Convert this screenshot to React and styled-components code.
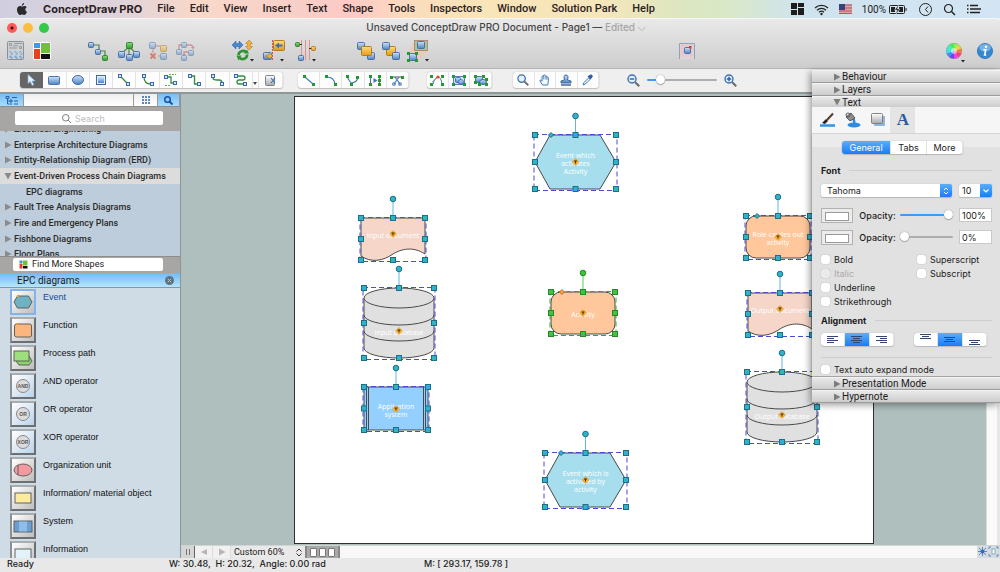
import React from 'react';
import styled, { createGlobalStyle, css } from 'styled-components';

const GlobalStyle = createGlobalStyle`
    * { box-sizing: border-box; }
    body { margin: 0; overflow: hidden; }
    body, button, input, select {
        font-family: Inter, Roboto, "Liberation Sans", sans-serif;
        font-size: 9px;
        color: #1c1c1c;
    }
    button { border: 0; padding: 0; background: none; }
    svg { display: block; flex: none; overflow: visible; }
`;

const narrowFont = 'Roboto, Inter, "Liberation Sans", sans-serif';

const AppContainer = styled.div`
    display: flex;
    flex-direction: column;
    height: 100vh;
    position: relative;
    background: #ececec;
`;

/* ---------- menu bar ---------- */

const MenuBar = styled.nav`
    display: flex;
    align-items: center;
    flex: none;
    height: 18px;
    padding: 0 19px 0 17px;
    background: linear-gradient(90deg, #d0cfe0 0%, #dfd3da 12%, #f9d8c9 20%, #f8cfc8 30%, #ffc9c6 35%, #fbdcbd 41%, #f8e5b8 48%, #f6e6bb 60%, #dde6c0 68%, #d9e8c9 73%, #cfe3ee 80%, #d3e5f4 100%);
`;

const MenuList = styled.div`
    display: flex;
    gap: 15px;
    margin-left: 16px;
`;

const MenuItem = styled.button`
    font-family: ${props => props.$bold ? 'Inter, sans-serif' : narrowFont};
    font-size: 11px;
    line-height: 18px;
    font-weight: ${props => props.$bold ? 700 : 500};
    color: #2b211f;
    white-space: nowrap;
`;

const MenuExtras = styled.div`
    display: flex;
    align-items: center;
    gap: ${props => props.$gap}px;
    margin-left: auto;
`;

const BatteryStatus = styled.div`
    display: flex;
    align-items: center;
    gap: 3px;
    font-family: ${narrowFont};
    font-size: 10px;
`;

/* ---------- window chrome ---------- */

const WindowHeader = styled.header`
    flex: none;
    height: 51px;
    border-top: 1px solid #f6f6f6;
    border-bottom: 1px solid #b5b5b5;
    border-radius: 4px 4px 0 0;
    background: linear-gradient(#e9e9e9, #cdcdcd);
`;

const TitleRow = styled.div`
    display: grid;
    grid-template-columns: 1fr auto 1fr;
    align-items: center;
    height: 17px;
    padding: 0 7px;
`;

const TrafficLights = styled.div`
    display: flex;
    gap: 6px;
`;

const TrafficLight = styled.button`
    width: 10px;
    height: 10px;
    border-radius: 50%;
    background: ${props => props.$color};
`;

const WindowTitle = styled.h1`
    margin: 0;
    padding-left: 12px;
    font-size: 10px;
    font-weight: 500;
    color: #464646;

    span { color: #a5a5a5; }
`;

const MainToolbar = styled.div`
    display: flex;
    align-items: center;
    height: 29px;
    padding: 0 7px;
`;

const IconGroup = styled.div`
    display: flex;
    align-items: center;
    gap: ${props => props.$gap || 9}px;
    margin-left: ${props => props.$push ? 'auto' : (props.$before || 0) + 'px'};
`;

const IconButton = styled.button`
    display: flex;
    opacity: ${props => props.$faded ? 0.55 : 1};
`;

const DrawToolbar = styled.div`
    display: flex;
    align-items: center;
    flex: none;
    height: 25px;
    padding: 0 20px 1px;
    background: #efefef;
    border-bottom: 2px solid #8f9898;
`;

const ToolSet = styled.div`
    display: grid;
    grid-template-columns: ${props => props.$columns};
    width: ${props => props.$width}px;
    height: 16px;
    margin-left: ${props => props.$before || 0}px;
    border-radius: 3px;
    overflow: hidden;
    background: #fdfdfd;
    box-shadow: 0 0 1px #999, 0 1px 1px #c4c4c4;
`;

const Tool = styled.button`
    display: flex;
    align-items: center;
    justify-content: center;
    border-right: 1px solid #e4e4e4;
    ${props => props.$active && css`
        background: #666;
        border-color: #666;
    `}
`;

const ZoomControl = styled.div`
    display: flex;
    align-items: center;
    gap: 7px;
    margin-left: 28px;
`;

const Slider = styled.input.attrs({ type: 'range' })`
    appearance: none;
    width: ${props => props.$width}px;
    height: 12px;
    margin: 0;
    background: none;

    &::-webkit-slider-runnable-track {
        height: 2px;
        border-radius: 1px;
        background: linear-gradient(90deg, #3d9bf7 ${props => props.value}%, #adadad ${props => props.value}%);
    }
    &::-webkit-slider-thumb {
        appearance: none;
        width: 9px;
        height: 9px;
        margin-top: -4px;
        border-radius: 50%;
        background: #fff;
        box-shadow: 0 0 1px #777, 0 1px 1px #aaa;
    }
`;

/* ---------- library panel ---------- */

const Body = styled.div`
    display: flex;
    flex: 1;
    min-height: 0;
`;

const Sidebar = styled.aside`
    display: flex;
    flex-direction: column;
    flex: none;
    width: 181px;
    border-right: 1px solid #8e9496;
    background: #cfdbe5;
    font-family: ${narrowFont};
`;

const SidebarTabs = styled.div`
    display: grid;
    grid-template-columns: 24px 1fr 24px 22px;
    flex: none;
    height: 12px;
    background: #8a8a8a;
`;

const SidebarTab = styled.button`
    display: flex;
    align-items: center;
    justify-content: center;
    border-right: 1px solid #999;
    background: ${props => props.$active ? 'linear-gradient(#78bdf4, #a8dcff)' : 'linear-gradient(#eee, #fff)'};
`;

const SearchBand = styled.div`
    display: flex;
    align-items: center;
    flex: none;
    height: ${props => props.$height}px;
    padding: 0 17px 2px ${props => props.$height > 20 ? 15 : 13}px;
    border-top: 1px solid #8d8d8d;
    background: #a7a6a4;
`;

const SearchField = styled.label`
    display: flex;
    align-items: center;
    gap: 4px;
    flex: 1;
    height: 14px;
    padding-left: 47px;
    border-radius: 2px;
    background: #fff;
`;

const SearchInput = styled.input`
    width: 80px;
    border: 0;
    padding: 0;
    background: none;
    outline: none;

    &::placeholder { color: #bcbcbc; }
`;

const TreeViewport = styled.div`
    flex: none;
    height: 125px;
    overflow: hidden;
    background: #becddb;
`;

/* list is scrolled down a little, first row is cut off */
const TreeList = styled.ul`
    display: flex;
    flex-direction: column;
    height: 141px;
    margin: -10px 0 0;
    padding: 0;
    list-style: none;
`;

const TreeRow = styled.li`
    display: flex;
    align-items: center;
    gap: 3px;
    flex: 1;
    padding-left: ${props => props.$child ? 26 : 5}px;
    background: ${props => props.$selected ? '#dcdcdc' : 'transparent'};
    font-weight: 500;
    color: #2a2a2a;
    white-space: nowrap;
`;

const FindMoreButton = styled.button`
    display: flex;
    align-items: center;
    gap: 4px;
    flex: 1;
    height: 13px;
    padding-left: 6px;
    border-radius: 2px;
    background: #fff;
    font-family: ${narrowFont};
`;

const LibraryHeader = styled.div`
    display: flex;
    align-items: center;
    justify-content: space-between;
    flex: none;
    height: 15px;
    padding: 0 6px 0 17px;
    border-bottom: 1px solid #8797a2;
    background: linear-gradient(#72b9f2, #b4e6ff);
    font-size: 10px;
`;

const LibraryList = styled.ul`
    flex: 1;
    min-height: 0;
    margin: 0;
    padding: 1px 0 0 10px;
    overflow: hidden;
    list-style: none;
`;

const LibraryItem = styled.li`
    display: flex;
    gap: 7px;
    height: 28px;
    font-family: "Liberation Sans", Arial, sans-serif;
    line-height: 16px;
    color: ${props => props.$selected ? '#1747a0' : '#111'};
`;

const Thumb = styled.div`
    display: flex;
    align-items: center;
    justify-content: center;
    width: 26px;
    height: 26px;
    border: 2px solid;
    border-color: ${props => props.$selected ? '#82b4ea' : '#a9adb0 #6d7072 #6d7072 #8d9092'};
    background: ${props => props.$tint ? 'linear-gradient(135deg, #fff, #b9d2ec)' : 'linear-gradient(135deg, #fff, #bdbdbd)'};
`;

/* ---------- canvas ---------- */

const Workspace = styled.main`
    display: flex;
    flex-direction: column;
    flex: 1;
    min-width: 0;
`;

const CanvasRow = styled.div`
    display: flex;
    flex: 1;
    min-height: 0;
`;

const Canvas = styled.div`
    display: flex;
    flex: 1;
    padding: 2px 112px 1px 113px;
    background: #afbfbe;
`;

const Page = styled.div`
    position: relative;
    flex: 1;
    border: 1px solid #2e2e2e;
    background: #fff;
`;

const VerticalScroll = styled.div`
    width: 14px;
    border-right: 3px solid #e6e6e6;
    border-left: 1px solid #dcdcdc;
    background: #fafafa;
`;

const Node = styled.div`
    position: absolute;
    left: ${props => props.$x}px;
    top: ${props => props.$y}px;
    width: ${props => props.$w}px;
    height: ${props => props.$h}px;
`;

const NodeLayer = styled.svg`
    position: absolute;
    left: 0;
    top: 0;
`;

const NodeLabel = styled.div`
    position: absolute;
    left: 0;
    right: 0;
    top: 0;
    display: flex;
    align-items: center;
    justify-content: center;
    height: ${props => props.$h}px;
    font-family: "Open Sans", "Noto Sans", sans-serif;
    font-size: 7px;
    line-height: 8px;
    color: #fff;
    text-align: center;
    white-space: pre;
`;

const BottomRow = styled.div`
    display: flex;
    align-items: stretch;
    flex: none;
    height: 13px;
    border-top: 1px solid #cfd4d4;
    background: #f8f8f8;
`;

const PageStep = styled.button`
    display: flex;
    align-items: center;
    justify-content: center;
    width: ${props => props.$narrow ? 14 : 18}px;
    border-right: 1px solid ${props => props.$narrow ? '#666' : '#dcdcdc'};
    background: ${props => props.$narrow ? '#d5d5d5' : '#f1f1f1'};
`;

const ZoomSelectWrap = styled.label`
    display: flex;
    align-items: center;
    width: 74px;
    padding: 0 3px;
    background: #e9e9e9;
`;

const PlainSelect = styled.select`
    appearance: none;
    flex: 1;
    min-width: 0;
    height: 12px;
    border: 0;
    padding: 0;
    background: none;
    outline: none;
    font-family: ${props => props.$narrow ? narrowFont : 'Inter, sans-serif'};
`;

const PageThumbs = styled.div`
    display: flex;
    align-items: center;
    justify-content: center;
    gap: 2px;
    width: 35px;
    border: 1px solid #888;
    border-width: 0 2px;
    background: #a9a9a9;
`;

const PageThumb = styled.button`
    width: 7px;
    height: 9px;
    border: 1px solid #777;
    border-radius: 1px;
    background: #fff;
`;

const FitButtons = styled.div`
    display: flex;
    margin-left: auto;
    padding-right: 1px;
    background: #d5dbe0;
`;

const StatusBar = styled.footer`
    display: grid;
    grid-template-columns: 162px 255px 1fr;
    align-items: center;
    flex: none;
    height: 14px;
    padding: 0 0 4px 7px;
    background: #e8e8e8;
    font-weight: 500;

    span { white-space: pre; }
`;

/* ---------- inspector ---------- */

const Inspector = styled.section`
    position: absolute;
    top: 70px;
    right: 0;
    width: 188px;
    background: #e2e2e2;
    box-shadow: -2px 2px 7px rgba(0, 0, 0, 0.4);
`;

const SectionHeader = styled.button`
    display: flex;
    align-items: center;
    gap: 2px;
    width: 100%;
    height: ${props => props.$open ? 11 : 13}px;
    padding-left: 22px;
    border-top: 1px solid #f2f2f2;
    border-bottom: ${props => props.$open ? 0 : 1}px solid #9c9c9c;
    background: linear-gradient(#e8e8e8, #cdcdcd);
    font-family: ${narrowFont};
    font-size: 10px;
`;

const InspectorIcons = styled.div`
    display: flex;
    height: 27px;
    padding-left: 3px;
    border-bottom: 1px solid #dadada;
    background: #f6f6f6;
`;

const InspectorIcon = styled.button`
    display: flex;
    align-items: center;
    justify-content: center;
    width: 25px;
    background: ${props => props.$active ? '#e4e4e4' : 'none'};
`;

const InspectorBody = styled.div`
    padding: 7px 8px 0 9px;
    border-bottom: 1px solid #a5a5a5;
    background: linear-gradient(#ebebeb 13px, #e1e1e1 13px);
    box-shadow: 0 1px 2px rgba(0, 0, 0, 0.3);
`;

const Segments = styled.div`
    display: grid;
    grid-template-columns: ${props => props.$columns || '1fr 1fr 1fr'};
    width: ${props => props.$width}px;
    height: 13px;
    border-radius: 3px;
    overflow: hidden;
    background: #fff;
    box-shadow: 0 0 1px #999, 0 1px 1px #bbb;
`;

const Segment = styled.button`
    display: flex;
    align-items: center;
    justify-content: center;
    border-right: 1px solid #e3e3e3;
    ${props => props.$active && css`
        background: linear-gradient(#5aaefb, #1b7cf6);
        color: #fff;
    `}
`;

const TabsRow = styled.div`
    display: flex;
    justify-content: center;
    padding: 0 8px 4px 0;
`;

const GroupTitle = styled.h2`
    display: flex;
    align-items: center;
    gap: 9px;
    margin: 6px 0;
    font-size: 9px;
    line-height: 13px;
    font-weight: 700;

    &::after {
        content: '';
        flex: 1;
        height: 1px;
        background: #cdcdcd;
    }
`;

const FieldRow = styled.div`
    display: flex;
    align-items: center;
    justify-content: space-between;
    height: ${props => props.$height}px;
`;

const SelectBox = styled.label`
    display: flex;
    width: ${props => props.$width}px;
    height: 13px;
    padding-left: ${props => props.$width > 50 ? 6 : 3}px;
    border-radius: 2px;
    overflow: hidden;
    background: #fff;
    box-shadow: 0 0 1px #999, 0 1px 1px #bbb;
`;

const SelectCap = styled.span`
    display: flex;
    align-items: center;
    justify-content: center;
    width: 12px;
    background: linear-gradient(#5aaefb, #1b7cf6);
`;

const Swatch = styled.button`
    width: 32px;
    height: 15px;
    padding: 3px;
    border: 1px solid #b2b2b2;
    background: #ececec;

    &::before {
        content: '';
        display: block;
        height: 7px;
        border: 1px solid #999;
        background: #fff;
    }
`;

const OpacityRows = styled.div`
    padding: 6px 0 4px;
`;

const OpacityField = styled.label`
    display: flex;
    align-items: center;
    gap: 4px;
    font-weight: 500;
`;

const PercentInput = styled.input`
    width: 33px;
    height: 14px;
    border: 1px solid #c9c9c9;
    padding: 0 2px;
    background: #fff;
`;

const CheckGrid = styled.div`
    display: grid;
    grid-template-columns: 96px 1fr;
    grid-auto-flow: column;
    grid-template-rows: repeat(4, 14px);
`;

const CheckLabel = styled.label`
    display: flex;
    align-items: center;
    gap: 4px;
    height: 14px;
    color: ${props => props.$disabled ? '#a9a9a9' : '#1c1c1c'};
`;

const CheckBox = styled.input.attrs({ type: 'checkbox' })`
    appearance: none;
    width: 9px;
    height: 9px;
    margin: 0;
    border-radius: 2px;
    background: #fff;
    box-shadow: 0 0 1px #888;

    &:disabled { background: #eaeaea; }
`;

const AlignRow = styled.div`
    display: flex;
    gap: 20px;
    margin-bottom: 4px;
    padding-bottom: 11px;
    border-bottom: 1px solid #cdcdcd;
`;

/* ---------- small drawings ---------- */

function Svg({ w, h, children }) {
    return <svg width={w} height={h} viewBox={`0 0 ${w} ${h}`} fill="none" aria-hidden="true">{children}</svg>;
}

function Gradients() {
    const colors = {
        blue: ['#cfe2fa', '#4d83c6'],
        green: ['#8be07a', '#2c9a2a'],
        gold: ['#ffdc7e', '#e59a12'],
        gray: ['#ffffff', '#a9a9a9'],
    };
    return (
        <NodeLayer width="0" height="0" aria-hidden="true">
            <defs>
                {Object.keys(colors).map(key => (
                    <linearGradient id={key} key={key} x1="0" y1="0" x2="0" y2="1">
                        <stop offset="0" stopColor={colors[key][0]} />
                        <stop offset="1" stopColor={colors[key][1]} />
                    </linearGradient>
                ))}
            </defs>
        </NodeLayer>
    );
}

const strokes = { blue: '#41699c', green: '#2a7a2a', gold: '#a9741a', gray: '#777' };

function Box({ x, y, s = 6, h, c = 'blue' }) {
    return <rect x={x + 0.5} y={y + 0.5} width={s - 1} height={(h || s) - 1} rx="1" fill={`url(#${c})`} stroke={strokes[c]} strokeWidth="0.9" />;
}

function Dots({ points, c = '#1f9a2c', s = 3 }) {
    return points.map(([x, y]) => <rect key={x + '-' + y} x={x} y={y} width={s} height={s} fill={c} />);
}

function Ends({ a, b }) {
    return (
        <>
            <rect x={a[0]} y={a[1]} width="3" height="3" fill="#d5e6fa" stroke="#3b6ca8" />
            <rect x={b[0]} y={b[1]} width="3" height="3" fill="#d5e6fa" stroke="#3b6ca8" />
        </>
    );
}

function Triangle({ open, color = '#7d7d7d' }) {
    return (
        <Svg w={6} h={6}>
            <path d={open ? 'M-0.500 0h7L3 6.500z' : 'M0-0.500 6.500 3 0 6.500z'} fill={color} />
        </Svg>
    );
}

function Caret({ x, y }) {
    return <path d={`M${x} ${y}h4l-2 2.4z`} fill="#222" />;
}

function SolutionIcon({ size }) {
    return (
        <svg width={size} height={size} viewBox="0 0 18 18" aria-hidden="true">
            <rect width="18" height="18" rx="2" fill="#fff" />
            <path d="M1 1h6v5H1z" fill="#2f9df4" />
            <path d="M8 1h9v10H8z" fill="#6fc03a" />
            <path d="M1 7h6v10H1z" fill="#e8401c" />
            <path d="M8 12h9v5H8z" fill="#111" />
        </svg>
    );
}

function Magnifier({ sign, size = 13, color = '#3c70b4' }) {
    return (
        <svg width={size} height={size} viewBox="0 0 13 13" fill="none" aria-hidden="true">
            <path d="M8.200 8.200l4 4" stroke="#6b6b6b" strokeWidth="2" />
            <circle cx="5" cy="5" r="4" fill="#e4f0fc" stroke={color} strokeWidth="1.400" />
            {sign && <path d={sign === '+' ? 'M2.800 5h4.400M5 2.800v4.400' : 'M2.800 5h4.400'} stroke="#2a5ea8" strokeWidth="1.400" />}
        </svg>
    );
}

const mainIcons = {
    library: (
        <Svg w={18} h={19}>
            <rect x="0.500" y="0.500" width="16" height="18" rx="1" fill="#cdd1d4" stroke="#8b9094" />
            <path d="M2.500 2.500h2v2h-2zM7 2.500h8M2 7h8M12.500 5.500h2v2h-2zM6 4.800h5" stroke="#8d9499" strokeWidth="0.900" />
            <path d="M2.500 10.500l3 3M7.500 10.500l3 3M12.500 10.500l2.500 3M2.500 15l3 2.500M7.500 15l3 2.500M12.500 15l2.500 2.500" stroke="#7fa9cf" strokeWidth="2" />
            <path d="M2.500 11l2 2M7.500 11l2 2M12.500 11l2 2" stroke="#e3f0fa" strokeWidth="0.800" />
        </Svg>
    ),
    chain: (
        <Svg w={22} h={20}>
            <path d="M7 4h5v4M14 10h4v4" stroke="#44874a" strokeWidth="1.200" />
            <Box x={1} y={1} /><Box x={8} y={8} /><Box x={15} y={14} c="green" />
        </Svg>
    ),
    tree: (
        <Svg w={22} h={20}>
            <path d="M11 6L4 12M11 6v9M11 6l7 6" stroke="#4c8c4c" strokeWidth="1.200" />
            <Box x={8} y={1} s={7} c="green" /><Box x={0} y={10} s={7} /><Box x={15} y={10} s={7} /><Box x={8} y={13} s={7} />
        </Svg>
    ),
    remove: (
        <Svg w={18} h={18}>
            <path d="M4 6v5M6 4h6M9 14h3" stroke="#b05a4a" />
            <Box x={0} y={0} s={7} /><Box x={11} y={3} s={7} c="gold" /><Box x={11} y={11} s={7} />
            <path d="M1.500 11.500l5 5M6.500 11.500l-5 5" stroke="#d43b2c" strokeWidth="2" />
        </Svg>
    ),
    rotate: (
        <Svg w={18} h={18}>
            <path d="M3 7V3h3M10 3h4q3 0 3 3M13 10H8v3" stroke="#c85a66" strokeWidth="1.300" />
            <path d="M15 5h4l-2 2.500zM6 12h4l-2 2.500z" fill="#c85a66" />
            <Box x={5} y={0} s={6} /><Box x={0} y={7} s={6} /><Box x={12} y={8} s={6} /><Box x={5} y={13} s={6} />
        </Svg>
    ),
    flip: (
        <Svg w={22} h={21}>
            <path d="M0 5l4-4v2.500h3V1l4 4-4 4V6.500H4V9z" fill="#4788d0" stroke="#2a5a94" strokeWidth="0.500" />
            <path d="M17 0l3.500 3.500h-2v3h2L17 10l-3.500-3.500h2v-3h-2z" fill="#f1b23a" stroke="#a87318" strokeWidth="0.500" />
            <path d="M6.500 15a4.500 4 0 0 1 7.500-3M15 14.500a4.500 4 0 0 1-7.500 3.500" stroke="#2e9330" strokeWidth="2.600" />
            <path d="M12 13.500h5l-2-4zM9.500 15.500h-5l2 5z" fill="#2e9330" />
            <Caret x={18} y={19} />
        </Svg>
    ),
    align: (
        <Svg w={22} h={21}>
            <Box x={10} y={0} s={12} h={11} c="gold" />
            <path d="M12 5.500l4-3v2h3.500v2H16v2z" fill="#3f6fae" />
            <Box x={0} y={12} s={9} h={8} />
            <path d="M3 15h3v-2l4 3-4 3v-2H3z" fill="#f4b73e" stroke="#a06d12" strokeWidth="0.500" />
            <path d="M9.500 0v21" stroke="#e04c4c" strokeDasharray="2 1" />
            <Caret x={17} y={19} />
        </Svg>
    ),
    distribute: (
        <Svg w={22} h={21}>
            <path d="M7.500 0v20M11.500 0v20M15.500 0v20" stroke="#e3908c" />
            <Box x={1} y={2} s={5} c="green" /><Box x={17} y={6} s={5} c="gold" /><Box x={4} y={15} s={6} />
            <path d="M6 4.500h2M15 8.500h2" stroke="#333" />
            <Caret x={18} y={19} />
        </Svg>
    ),
    front: (
        <Svg w={18} h={18}>
            <Box x={0} y={0} s={8} /><Box x={10} y={10} s={8} /><Box x={4} y={4} s={11} h={10} c="gold" />
        </Svg>
    ),
    back: (
        <Svg w={18} h={18}>
            <Box x={4} y={4} s={10} c="gold" /><Box x={0} y={0} s={8} /><Box x={10} y={10} s={8} />
        </Svg>
    ),
    group: (
        <Svg w={22} h={22}>
            <path d="M8 1L1 13l9 8 11-10z" fill="#f3c5b0" opacity="0.700" />
            <rect x="7.500" y="0.500" width="13" height="10" fill="#a8c3a0" stroke="#b48a6a" />
            <Box x={10} y={1} s={8} />
            <Box x={2} y={13} s={8} />
            <Dots points={[[0, 12], [8, 12], [0, 19], [8, 19]]} />
            <Caret x={18} y={19} />
        </Svg>
    ),
    snap: (
        <Svg w={16} h={16}>
            <path d="M0.500 16V0.500h15V16" fill="#e3d3d8" stroke="#8ba3bf" />
            <path d="M1 3h14M1 6h14M1 9h14M1 12h14M4 1v14M12 1v14" stroke="#edb6bb" strokeWidth="0.600" />
            <Box x={5} y={4} s={7} /><path d="M10 3h2.500v2.500H10z" fill="#d8403a" />
        </Svg>
    ),
    info: (
        <Svg w={16} h={16}>
            <circle cx="8" cy="8" r="7.600" fill="#3487d0" stroke="#256aa8" strokeWidth="0.700" />
            <ellipse cx="8" cy="4.800" rx="5.800" ry="3.800" fill="#8fc4ee" opacity="0.700" />
            <circle cx="9" cy="3.800" r="1.200" fill="#fff" />
            <path d="M6.300 6.800h2.500L7.600 12h1.600" stroke="#fff" strokeWidth="1.600" />
        </Svg>
    ),
};

function ColorWheel() {
    const hues = [90, 50, 20, 340, 305, 255, 215, 185, 160, 130];
    const step = (Math.PI * 2) / hues.length;
    return (
        <Svg w={18} h={18}>
            {hues.map((hue, i) => {
                const a = i * step - Math.PI / 2;
                const b = a + step + 0.05;
                return (
                    <path
                        key={hue}
                        d={`M8 9L${8 + 8 * Math.cos(a)} ${9 + 8 * Math.sin(a)}A8 8 0 0 1 ${8 + 8 * Math.cos(b)} ${9 + 8 * Math.sin(b)}z`}
                        fill={`hsl(${hue}, 85%, 60%)`}
                    />
                );
            })}
            <circle cx="8" cy="9" r="3" fill="#fff" opacity="0.500" />
            <circle cx="8" cy="9" r="7.700" stroke="#999" strokeWidth="0.500" />
            <Caret x={15} y={18} />
        </Svg>
    );
}

const green = { stroke: '#2f8f3a', strokeWidth: 1.3 };
const blueLine = { stroke: '#3f78b8', strokeWidth: 1.1 };

const shapeTools = [
    ['Select', <Svg w={9} h={12}><path d="M1 0.500v9l2.200-2 1.900 4 1.700-.8-1.800-3.700h3.200z" fill="#e5f1fd" stroke="#7fb0e0" strokeWidth="0.700" /></Svg>],
    ['Rectangle', <Svg w={12} h={9}><Box x={0} y={0} s={12} h={9} /></Svg>],
    ['Ellipse', <Svg w={12} h={10}><ellipse cx="6" cy="5" rx="5.500" ry="4.500" fill="url(#blue)" stroke="#41699c" /></Svg>],
    ['Text box', <Svg w={10} h={10}><rect x="0.500" y="0.500" width="9" height="9" fill="#e3effb" stroke="#41699c" /><rect x="2" y="2" width="6" height="6" fill="url(#blue)" /></Svg>],
    ['Direct connector', <Svg w={12} h={12}><path d="M3 3l6 6" {...green} /><Ends a={[0.5, 0.5]} b={[8.5, 8.5]} /></Svg>],
    ['Arc connector', <Svg w={12} h={12}><path d="M2 3q0 7 7 7" {...green} /><Ends a={[0.5, 0.5]} b={[8.5, 8.5]} /></Svg>],
    ['Smart connector', <Svg w={13} h={12}><path d="M4 3h3v6h3" {...green} /><path d="M5 0.500h7M1 11.500h6" stroke="#57b45c" strokeDasharray="2 1" /><Ends a={[0.5, 1.5]} b={[9.5, 7.5]} /></Svg>],
    ['Step connector', <Svg w={13} h={12}><path d="M4 2h2.500v8H9" {...green} /><Ends a={[0.5, 0.5]} b={[9.5, 8.5]} /></Svg>],
    ['Round connector', <Svg w={13} h={12}><path d="M2 4q0 2 4 2h2q3 0 3 3" {...green} /><Ends a={[0.5, 0.5]} b={[9.5, 8.5]} /></Svg>],
    ['Curve connector', <Svg w={13} h={12}><path d="M4 2h5q2 0 2 2t-2 2H5q-2 0-2 2t2 2h5" {...green} /><Ends a={[0.5, 0.5]} b={[9.5, 8.5]} /></Svg>],
    ['More connectors', <Svg w={4} h={3}><path d="M0 3h4L2 6z" fill="#444" /></Svg>],
    ['Page link', <Svg w={11} h={11}><Box x={0} y={0} s={10} h={11} c="gray" /><path d="M6 3l4 5M10 3L6 8" stroke="#3f78b8" strokeWidth="1.200" /></Svg>],
];

const lineTools = [
    ['Line', <Svg w={12} h={11}><path d="M2 2l8 7" {...blueLine} /><Dots points={[[0, 0], [9, 8]]} /></Svg>],
    ['Arc', <Svg w={12} h={11}><path d="M2 2q7 0 8 7" {...blueLine} /><Dots points={[[0, 0], [9, 8]]} /></Svg>],
    ['Spline', <Svg w={13} h={11}><path d="M1 2l4 6q5 0 7-5" {...blueLine} /><Dots points={[[0, 0], [4, 8], [10, 1]]} /></Svg>],
    ['Divide', <Svg w={12} h={11}><path d="M1.500 1v9M10.500 1v9" {...blueLine} /><path d="M4.500 3l4 2.500-4 2.500z" fill="#3f78b8" /><Dots points={[[0, 0], [0, 8], [9, 0], [9, 4], [9, 8]]} /></Svg>],
    ['Cut', <Svg w={14} h={11}><path d="M1 2h12" stroke="#555" /><path d="M4 9l5-7M10 9L5 2" {...blueLine} /><circle cx="4" cy="9" r="1.300" {...blueLine} /><circle cx="10" cy="9" r="1.300" {...blueLine} /><Dots points={[[0, 1], [11, 1]]} /></Svg>],
];

const editTools = [
    ['Edit points', <Svg w={14} h={11}><path d="M3 9Q5 2 8 2t4 7" stroke="#3f78b8" /><path d="M2 7l6-5" stroke="#999" /><Dots points={[[0, 0], [11, 0], [0, 8], [11, 8]]} /><circle cx="8" cy="2" r="1.600" fill="#e2452e" /></Svg>],
    ['Group points', <Svg w={14} h={11}><rect x="1.500" y="1.500" width="11" height="8" fill="#d3e4f7" stroke="#4f7fb5" /><Box x={3} y={2} s={6} /><circle cx="9" cy="7" r="2.500" fill="url(#blue)" stroke="#41699c" strokeWidth="0.800" /><Dots points={[[0, 0], [11, 0], [0, 8], [11, 8]]} /></Svg>],
    ['Ungroup points', <Svg w={14} h={11}><Box x={1} y={1} s={8} h={7} /><ellipse cx="9" cy="7" rx="3.500" ry="2.500" fill="url(#blue)" stroke="#41699c" /><Dots points={[[0, 0], [8, 0], [0, 6], [4, 8], [11, 3], [11, 8]]} /></Svg>],
];

const viewTools = [
    ['Zoom', <Magnifier size={12} />],
    ['Pan', <Svg w={12} h={12}><path d="M3.500 11Q1.500 8 0.800 6.500 1.500 5.500 3 7.200V2.500q.8-1 1.500 0V1.300q.9-1 1.600 0v1q.9-1 1.600 0v1.200q.9-.8 1.600 0v4Q9.300 9 8.500 11z" fill="#f4f9fe" stroke="#3f78b8" /><path d="M4.600 2.500v3M6.200 2.500v3M7.800 3v3" stroke="#3f78b8" strokeWidth="0.700" /></Svg>],
    ['Stamp', <Svg w={12} h={12}><path d="M4.500 6Q3 1 6 1t1.500 5L11 7v2H1V7z" fill="url(#blue)" stroke="#41699c" /><path d="M1 11h10" stroke="#41699c" strokeWidth="1.500" /></Svg>],
    ['Eyedropper', <Svg w={11} h={12}><path d="M1 11l1-2.500 5-5 1.500 1.500-5 5z" fill="#e8f2fc" stroke="#4a7ab0" /><path d="M6 2.500l2.500 2.500L10.500 2 9 .8z" fill="#2f5f9d" stroke="#2f5f9d" /></Svg>],
];

function AlignIcon({ widths, top = 0 }) {
    return (
        <Svg w={11} h={10}>
            {widths.map(([x, w], i) => (
                <path key={i} d={`M${x} ${top + 1.5 + i * 2}h${w}`} stroke="#2f4674" strokeWidth="1.200" />
            ))}
        </Svg>
    );
}

/* ---------- diagram ---------- */

function shapeOf(kind, w, h) {
    const line = { stroke: '#4a4a4a', strokeWidth: 1 };
    switch (kind) {
        case 'event':
            return <path d={`M15 0H${w - 16}L${w} ${h / 2}L${w - 16} ${h}H15L0 ${h / 2}z`} fill="#a6deee" {...line} />;
        case 'function':
            return <rect width={w} height={h} rx="10" fill="#ffc79b" {...line} />;
        case 'document':
            return <path d={`M0 0H${w}V36C52 28 40 31 32 36C22 43 10 45 0 38z`} fill="#f5d6c9" {...line} />;
        case 'database':
            return (
                <g fill="#e0e0e0" {...line}>
                    <path d={`M0 10V60A${w / 2} 10 0 0 0 ${w} 60V10`} />
                    <path d={`M0 27A${w / 2} 10 0 0 0 ${w} 27M0 43A${w / 2} 10 0 0 0 ${w} 43`} fill="none" />
                    <ellipse cx={w / 2} cy="10" rx={w / 2} ry="10" />
                </g>
            );
        default:
            return (
                <g {...line}>
                    <rect width={w} height={h} fill="#93d0ff" />
                    <path d={`M2.500 0V${h}M4.500 0V${h}M${w - 4.5} 0V${h}M${w - 2.5} 0V${h}`} />
                </g>
            );
    }
}

function DiagramNode({ kind, x, y, w, h, label, main }) {
    const fill = main ? '#3fc43f' : '#2fb3cb';
    const stroke = main ? '#2a862a' : '#1d6f84';
    const textY = kind === 'document' ? 16 : kind === 'database' ? 43 : Math.round(h / 2);
    const handles = [[0, 0], [0.5, 0], [1, 0], [0, 0.5], [1, 0.5], [0, 1], [0.5, 1], [1, 1]];
    const hasKnob = kind === 'event' || kind === 'function';
    const knobX = kind === 'event' ? 16 : 11;
    return (
        <Node $x={x} $y={y} $w={w} $h={h}>
            <NodeLayer width={w} height={h}>
                {shapeOf(kind, w, h)}
                <rect x="-1" y="-0.500" width={w + 2} height={h + 2} fill="none" stroke={main ? '#2fae2f' : '#4a4ad6'} strokeDasharray="5 3" />
            </NodeLayer>
            <NodeLabel $h={textY * 2 + 4}>{label}</NodeLabel>
            <NodeLayer width={w} height={h}>
                <path d={`M${w / 2} -19V0`} stroke={main ? '#5cc85c' : '#62b4e6'} />
                <circle cx={w / 2} cy="-19" r="2.800" fill={fill} stroke={stroke} />
                {handles.map(([fx, fy]) => (
                    <rect key={fx + '/' + fy} x={fx * w - 2.5} y={fy * h - 2.5} width="5" height="5" fill={fill} stroke={stroke} />
                ))}
                {hasKnob && (
                    <path d={`M${knobX} -2.500l2.500 2.500-2.500 2.500-2.500-2.500z`} fill={main ? '#f7a72c' : fill} stroke={main ? '#b8791c' : stroke} />
                )}
                <g transform={`translate(${w / 2} ${textY})`}>
                    <path d="M0-3.500L3.500 0 0 3.500-3.500 0z" fill="#ffb12e" stroke="#d9962a" strokeWidth="0.600" />
                    <path d="M-1.500-1.500h3v1h-1v2h-1v-2h-1z" fill="#3b2a0c" />
                </g>
            </NodeLayer>
        </Node>
    );
}

const nodes = [
    { kind: 'event', x: 240, y: 38, w: 81, h: 54, label: 'Event which\nactivates\nActivity' },
    { kind: 'document', x: 66, y: 121, w: 64, h: 42, label: 'Input document' },
    { kind: 'database', x: 69, y: 191, w: 70, h: 70, label: 'Input database' },
    { kind: 'system', x: 69, y: 290, w: 64, h: 43, label: 'Application\nsystem' },
    { kind: 'function', x: 256, y: 195, w: 64, h: 42, label: 'Activity', main: true },
    { kind: 'function', x: 451, y: 119, w: 64, h: 42, label: 'Role carries out\nactivity' },
    { kind: 'document', x: 453, y: 196, w: 64, h: 42, label: 'Output document' },
    { kind: 'database', x: 452, y: 275, w: 70, h: 70, label: 'Output database' },
    { kind: 'event', x: 250, y: 356, w: 81, h: 54, label: 'Event which is\nactivated by\nactivity' },
];

const tree = [
    { name: 'Electrical Engineering' },
    { name: 'Enterprise Architecture Diagrams' },
    { name: 'Entity-Relationship Diagram (ERD)' },
    { name: 'Event-Driven Process Chain Diagrams', open: true },
    { name: 'EPC diagrams', child: true },
    { name: 'Fault Tree Analysis Diagrams' },
    { name: 'Fire and Emergency Plans' },
    { name: 'Fishbone Diagrams' },
    { name: 'Floor Plans' },
];

const dark = { stroke: '#555', strokeWidth: 0.9 };

function Operator({ children }) {
    return (
        <Svg w={20} h={20}>
            <circle cx="10" cy="10" r="6.500" fill="#dcdcdc" stroke="#888" />
            <text x="10" y="12" fontSize="5" fontWeight="700" fontFamily="Liberation Sans, sans-serif" textAnchor="middle" fill="#555">{children}</text>
        </Svg>
    );
}

const library = [
    ['Event', <Svg w={20} h={20}><path d="M4.500 4h11l3.500 6-3.500 6h-11L1 10z" fill="#6fb2c4" {...dark} /><path d="M4 3h2v2H4z" fill="#f39a1e" /></Svg>],
    ['Function', <Svg w={20} h={20}><rect x="1.500" y="4" width="17" height="13" rx="2" fill="#fbb67c" {...dark} /><path d="M3 3h2v2H3z" fill="#f39a1e" /></Svg>],
    ['Process path', <Svg w={20} h={20}><path d="M6 8h10l3 5-3 4H6l-3-4z" fill="#8bd46a" {...dark} /><rect x="1" y="3" width="15" height="10" fill="#9ddf7c" {...dark} /></Svg>],
    ['AND operator', <Operator>AND</Operator>, true],
    ['OR operator', <Operator>OR</Operator>, true],
    ['XOR operator', <Operator>XOR</Operator>, true],
    ['Organization unit', <Svg w={20} h={20}><ellipse cx="10" cy="10" rx="9" ry="6" fill="#f39aa0" {...dark} /><path d="M5 5v10" {...dark} /></Svg>],
    ['Information/ material object', <Svg w={20} h={20}><rect x="2" y="5" width="16" height="10" fill="#fdeb9e" {...dark} /></Svg>],
    ['System', <Svg w={20} h={20}><rect x="1" y="5" width="18" height="11" fill="#6b9fd4" {...dark} /><path d="M6 5.500h8v10H6z" fill="#8fbdea" /></Svg>],
    ['Information', <Svg w={20} h={20}><rect x="2" y="5" width="16" height="12" fill="#e2f2fb" {...dark} /></Svg>],
];

const menus = ['File', 'Edit', 'View', 'Insert', 'Text', 'Shape', 'Tools', 'Inspectors', 'Window', 'Solution Park', 'Help'];

function TopMenu() {
    return (
        <MenuBar>
            <Svg w={10} h={12}>
                <path d="M7.100 0C7.200 1.500 6 2.700 4.800 2.600 4.700 1.300 5.900.1 7.100 0zM9.700 4.200C7.700 5.500 8 7.900 10 8.700 9.400 10.500 8.300 12 7.200 12c-.8 0-1.100-.5-2-.5-1 0-1.300.5-2.100.5C1.700 12 0 9.300 0 6.700 0 4.200 1.500 3 3 3c.9 0 1.600.6 2.300.6C5.900 3.600 6.700 3 7.700 3c.8 0 1.500.4 2 1.200z" fill="#2b2b2b" />
            </Svg>
            <MenuList>
                <MenuItem $bold>ConceptDraw PRO</MenuItem>
                {menus.map(name => <MenuItem key={name}>{name}</MenuItem>)}
            </MenuList>
            <MenuExtras $gap={12}>
                <MenuExtras $gap={10}>
                    <Svg w={13} h={12}><path d="M0 0h6v6H0zM7 0h6v4H7zM0 7h6v5H0zM7 5h6v7H7z" fill="#1d1d1d" /></Svg>
                    <Svg w={15} h={11}><path d="M1 4a9.500 9.500 0 0 1 13 0M3 6.200a6.500 6.500 0 0 1 9 0M5 8.300a3.600 3.600 0 0 1 5 0" stroke="#222" strokeWidth="1.300" /><circle cx="7.500" cy="10" r="1.200" fill="#222" /></Svg>
                    <Svg w={13} h={10}><path d="M0 0h13v10H0z" fill="#d8a3a3" /><path d="M0 1h13M0 4h13M0 7h13M0 9.500h13" stroke="#ad5a62" /><path d="M0 0h6v6H0z" fill="#35407e" /></Svg>
                    <BatteryStatus>
                        100%
                        <Svg w={18} h={9}><rect x="0.500" y="0.500" width="15" height="8" rx="1" stroke="#222" /><path d="M2 2h4v5H2zM10 2h4v5h-4z" fill="#222" /><path d="M9.500 0l-4 5h2.500L7 9l4-5H8.500z" fill="#222" stroke="#d3e5f4" strokeWidth="0.500" /><path d="M17 3v3" stroke="#222" /></Svg>
                    </BatteryStatus>
                </MenuExtras>
                <Svg w={13} h={13}><circle cx="6.500" cy="6.500" r="6" stroke="#222" /><path d="M9 3.500L6.500 6.500 9 9.500" stroke="#222" /></Svg>
                <Svg w={11} h={11}><circle cx="4.500" cy="4.500" r="4" stroke="#222" strokeWidth="1.200" /><path d="M7.500 7.500l3.500 3.500" stroke="#222" strokeWidth="1.500" /></Svg>
                <Svg w={14} h={8}><path d="M0 0.500h1.500M3 0.500h8M0 4h1.500M3 4h11M0 7.500h1.500M3 7.500h10" stroke="#222" strokeWidth="1.400" /></Svg>
            </MenuExtras>
        </MenuBar>
    );
}

function Header() {
    return (
        <WindowHeader>
            <TitleRow>
                <TrafficLights>
                    <TrafficLight $color="radial-gradient(#4d0000 1px, #fc5b57 2px)" aria-label="Close" />
                    <TrafficLight $color="#fdbd41" aria-label="Minimize" />
                    <TrafficLight $color="#34c84a" aria-label="Full screen" />
                </TrafficLights>
                <WindowTitle>Unsaved ConceptDraw PRO Document - Page1 — <span>Edited ⌵</span></WindowTitle>
            </TitleRow>
            <MainToolbar>
                <IconGroup $gap={8}>
                    <IconButton aria-label="Libraries">{mainIcons.library}</IconButton>
                    <IconButton aria-label="Solutions"><SolutionIcon size={18} /></IconButton>
                </IconGroup>
                <IconGroup $before={36}>
                    <IconButton aria-label="Chain">{mainIcons.chain}</IconButton>
                    <IconButton aria-label="Tree">{mainIcons.tree}</IconButton>
                    <IconButton aria-label="Remove" $faded>{mainIcons.remove}</IconButton>
                    <IconButton aria-label="Rotate branch" $faded>{mainIcons.rotate}</IconButton>
                </IconGroup>
                <IconGroup $before={38}>
                    <IconButton aria-label="Rotate and flip">{mainIcons.flip}</IconButton>
                    <IconButton aria-label="Align">{mainIcons.align}</IconButton>
                    <IconButton aria-label="Distribute">{mainIcons.distribute}</IconButton>
                </IconGroup>
                <IconGroup $before={41} $gap={7}>
                    <IconButton aria-label="Bring to front">{mainIcons.front}</IconButton>
                    <IconButton aria-label="Send to back">{mainIcons.back}</IconButton>
                    <IconButton aria-label="Group">{mainIcons.group}</IconButton>
                </IconGroup>
                <IconGroup $before={250}>
                    <IconButton aria-label="Snap">{mainIcons.snap}</IconButton>
                </IconGroup>
                <IconGroup $push $gap={13}>
                    <IconButton aria-label="Colors"><ColorWheel /></IconButton>
                    <IconButton aria-label="Info">{mainIcons.info}</IconButton>
                </IconGroup>
            </MainToolbar>
        </WindowHeader>
    );
}

function ToolButtons({ tools, width, before, columns }) {
    return (
        <ToolSet $width={width} $before={before} $columns={columns || `repeat(${tools.length}, 1fr)`}>
            {tools.map(([name, icon]) => (
                <Tool key={name} aria-label={name} $active={name === 'Select'}>{icon}</Tool>
            ))}
        </ToolSet>
    );
}

function LibraryPanel() {
    return (
        <Sidebar>
            <SidebarTabs>
                <SidebarTab $active aria-label="Tree view">
                    <Svg w={12} h={9}><path d="M0 0.500h3v2H0zM4 4h2v2H4zM4 8h2M1.500 3v5h2M1.500 5h2M6 1.500h5M8 5h4M8 8h4" stroke="#2661ad" /></Svg>
                </SidebarTab>
                <SidebarTab aria-label="Library name" />
                <SidebarTab aria-label="Grid view">
                    <Svg w={8} h={9}><Dots c="#5c87bd" s={2} points={[[0, 0], [3, 0], [6, 0], [0, 3], [3, 3], [6, 3], [0, 6], [3, 6], [6, 6]]} /></Svg>
                </SidebarTab>
                <SidebarTab $active aria-label="Search">
                    <Svg w={9} h={9}><circle cx="3.500" cy="3.500" r="2.800" stroke="#1d4fa5" strokeWidth="1.500" /><path d="M5.500 5.500l3 3" stroke="#1d4fa5" strokeWidth="1.800" /></Svg>
                </SidebarTab>
            </SidebarTabs>
            <SearchBand $height={25}>
                <SearchField>
                    <Svg w={9} h={9}><circle cx="3.800" cy="3.800" r="3.300" stroke="#7c7c7c" /><path d="M6.200 6.200L9 9" stroke="#7c7c7c" /></Svg>
                    <SearchInput placeholder="Search" aria-label="Search" />
                </SearchField>
            </SearchBand>
            <TreeViewport>
                <TreeList>
                    {tree.map(item => (
                        <TreeRow key={item.name} $child={item.child} $selected={item.open}>
                            {!item.child && <Triangle open={item.open} color="#8b8b8b" />}
                            {item.name}
                        </TreeRow>
                    ))}
                </TreeList>
            </TreeViewport>
            <SearchBand $height={17}>
                <FindMoreButton><SolutionIcon size={9} />Find More Shapes</FindMoreButton>
            </SearchBand>
            <LibraryHeader>
                EPC diagrams
                <IconButton aria-label="Close library">
                    <Svg w={9} h={9}><circle cx="4.500" cy="4.500" r="4.500" fill="#63717b" /><path d="M2.800 2.800l3.400 3.400M6.200 2.800L2.800 6.200" stroke="#a9c9de" /></Svg>
                </IconButton>
            </LibraryHeader>
            <LibraryList>
                {library.map(([name, icon, tint], i) => (
                    <LibraryItem key={name} $selected={i === 0}>
                        <Thumb $selected={i === 0} $tint={tint}>{icon}</Thumb>
                        {name}
                    </LibraryItem>
                ))}
            </LibraryList>
        </Sidebar>
    );
}

function Check({ label, disabled }) {
    return (
        <CheckLabel $disabled={disabled}>
            <CheckBox disabled={disabled} />
            {label}
        </CheckLabel>
    );
}

function OpacityRow({ value, name }) {
    return (
        <FieldRow $height={22}>
            <Swatch aria-label={name} />
            <OpacityField>
                Opacity:
                <Slider $width={53} value={value} readOnly />
            </OpacityField>
            <PercentInput aria-label={name + ' opacity'} value={value + '%'} readOnly />
        </FieldRow>
    );
}

function TextInspector() {
    return (
        <Inspector>
            <SectionHeader><Triangle />Behaviour</SectionHeader>
            <SectionHeader><Triangle />Layers</SectionHeader>
            <SectionHeader $open><Triangle open />Text</SectionHeader>
            <InspectorIcons>
                <InspectorIcon aria-label="Line">
                    <Svg w={16} h={16}><path d="M0 13.500h15" stroke="#2f93e8" strokeWidth="2.500" /><path d="M2 11l4-4 2 2-3 3z" fill="#222" /><path d="M7 8l6-6.500" stroke="#5e3a2c" strokeWidth="2" /></Svg>
                </InspectorIcon>
                <InspectorIcon aria-label="Fill">
                    <Svg w={16} h={16}><ellipse cx="9" cy="13" rx="6.500" ry="2.500" fill="#2f8be0" /><path d="M7 5q3 3 2 8" stroke="#2f8be0" strokeWidth="2.500" /><path d="M1 5l5-4 4 5-5 3z" fill="#8f8f8f" stroke="#444" strokeWidth="0.800" /><circle cx="3" cy="3" r="2" stroke="#555" /></Svg>
                </InspectorIcon>
                <InspectorIcon aria-label="Shadow">
                    <Svg w={14} h={14}><rect x="3" y="3" width="11" height="10" rx="1" fill="#8db7e3" /><Box x={0} y={0} s={12} h={11} c="gray" /></Svg>
                </InspectorIcon>
                <InspectorIcon $active aria-label="Text">
                    <Svg w={14} h={16}><text x="7" y="13" fontSize="17" fontWeight="700" fontFamily="Liberation Serif, serif" textAnchor="middle" fill="#2c5c9c">A</text></Svg>
                </InspectorIcon>
            </InspectorIcons>
            <InspectorBody>
                <TabsRow>
                    <Segments $width={121} $columns="49px 36px 36px">
                        <Segment $active>General</Segment>
                        <Segment>Tabs</Segment>
                        <Segment>More</Segment>
                    </Segments>
                </TabsRow>
                <GroupTitle>Font</GroupTitle>
                <FieldRow $height={15}>
                    <SelectBox $width={131}>
                        <PlainSelect aria-label="Font family"><option>Tahoma</option></PlainSelect>
                        <SelectCap><Svg w={6} h={8}><path d="M1 3l2-2 2 2M1 5l2 2 2-2" stroke="#fff" /></Svg></SelectCap>
                    </SelectBox>
                    <SelectBox $width={33}>
                        <PlainSelect aria-label="Font size"><option>10</option></PlainSelect>
                        <SelectCap><Svg w={6} h={4}><path d="M0.500 0.500L3 3l2.500-2.500" stroke="#fff" strokeWidth="1.200" /></Svg></SelectCap>
                    </SelectBox>
                </FieldRow>
                <OpacityRows>
                    <OpacityRow name="Text color" value={100} />
                    <OpacityRow name="Background color" value={0} />
                </OpacityRows>
                <CheckGrid>
                    <Check label="Bold" />
                    <Check label="Italic" disabled />
                    <Check label="Underline" />
                    <Check label="Strikethrough" />
                    <Check label="Superscript" />
                    <Check label="Subscript" />
                </CheckGrid>
                <GroupTitle>Alignment</GroupTitle>
                <AlignRow>
                    <Segments $width={73}>
                        <Segment aria-label="Left"><AlignIcon widths={[[0, 11], [0, 7], [0, 11], [0, 7]]} /></Segment>
                        <Segment $active aria-label="Center"><AlignIcon widths={[[0, 11], [2, 7], [0, 11], [2, 7]]} /></Segment>
                        <Segment aria-label="Right"><AlignIcon widths={[[0, 11], [4, 7], [0, 11], [4, 7]]} /></Segment>
                    </Segments>
                    <Segments $width={73}>
                        <Segment aria-label="Top"><AlignIcon top={-2} widths={[[0, 11], [2, 7], [0, 11]]} /></Segment>
                        <Segment $active aria-label="Middle"><AlignIcon top={1} widths={[[0, 11], [2, 7], [0, 11]]} /></Segment>
                        <Segment aria-label="Bottom"><AlignIcon top={4} widths={[[0, 11], [2, 7], [0, 11]]} /></Segment>
                    </Segments>
                </AlignRow>
                <Check label="Text auto expand mode" />
            </InspectorBody>
            <SectionHeader><Triangle />Presentation Mode</SectionHeader>
            <SectionHeader><Triangle />Hypernote</SectionHeader>
        </Inspector>
    );
}

function App() {
    return (
        <AppContainer>
            <GlobalStyle />
            <Gradients />
            <TopMenu />
            <Header />
            <DrawToolbar>
                <ToolButtons tools={shapeTools} width={263} columns="repeat(10, 1fr) 6px 24px" />
                <ToolButtons tools={lineTools} width={111} before={15} />
                <ToolButtons tools={editTools} width={65} before={18} />
                <ToolButtons tools={viewTools} width={86} before={21} />
                <ZoomControl>
                    <IconButton aria-label="Zoom out"><Magnifier sign="-" /></IconButton>
                    <Slider $width={70} value={15} readOnly aria-label="Zoom" />
                    <IconButton aria-label="Zoom in"><Magnifier sign="+" /></IconButton>
                </ZoomControl>
            </DrawToolbar>
            <Body>
                <LibraryPanel />
                <Workspace>
                    <CanvasRow>
                        <Canvas>
                            <Page>
                                {nodes.map(node => <DiagramNode key={node.label} {...node} />)}
                            </Page>
                        </Canvas>
                        <VerticalScroll />
                    </CanvasRow>
                    <BottomRow>
                        <PageStep $narrow aria-label="Resize"><Svg w={4} h={6}><path d="M0.500 0v6M3.500 0v6" stroke="#777" /></Svg></PageStep>
                        <PageStep aria-label="Previous page"><Svg w={6} h={6}><path d="M6 0L0 3l6 3z" fill="#b5b5b5" /></Svg></PageStep>
                        <PageStep aria-label="Next page"><Triangle color="#b5b5b5" /></PageStep>
                        <ZoomSelectWrap>
                            <PlainSelect $narrow aria-label="Page zoom"><option>Custom 60%</option></PlainSelect>
                            <Svg w={6} h={9}><path d="M0.500 3.500L3 1l2.500 2.500M0.500 5.500L3 8l2.500-2.500" stroke="#333" /></Svg>
                        </ZoomSelectWrap>
                        <PageThumbs>
                            <PageThumb aria-label="Page 1" />
                            <PageThumb aria-label="Page 2" />
                            <PageThumb aria-label="Page 3" />
                        </PageThumbs>
                        <FitButtons>
                            <IconButton aria-label="Fit page"><Svg w={11} h={11}><path d="M5.500 1v9M1 5.500h9M2 2l7 7M9 2L2 9" stroke="#5d8cc4" /><circle cx="5.500" cy="5.500" r="2" fill="#2f6bb3" /></Svg></IconButton>
                            <IconButton aria-label="Fit width"><Svg w={11} h={11}><path d="M1 3V1h2M8 1h2v2M1 8v2h2M8 10h2V8" stroke="#5d8cc4" /><rect x="4" y="3" width="3" height="5" fill="#fff" stroke="#8ab" /></Svg></IconButton>
                        </FitButtons>
                    </BottomRow>
                </Workspace>
            </Body>
            <StatusBar>
                <span>Ready</span>
                <span>{'W: 30.48,  H: 20.32,  Angle: 0.00 rad'}</span>
                <span>M: [ 293.17, 159.78 ]</span>
            </StatusBar>
            <TextInspector />
        </AppContainer>
    );
}

export default App;
